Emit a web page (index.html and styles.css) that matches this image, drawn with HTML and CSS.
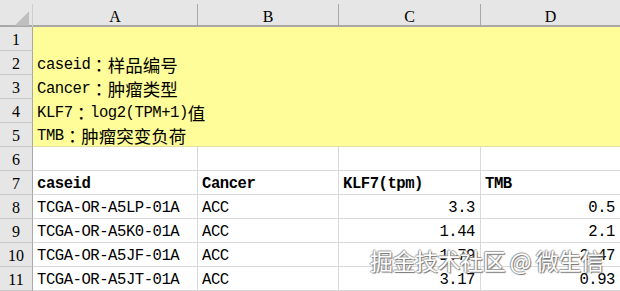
FILE: index.html
```html
<!DOCTYPE html>
<html lang="zh">
<head>
<meta charset="utf-8">
<title>Sheet</title>
<link rel="stylesheet" href="styles.css">
</head>
<body>
<div class="sheet">
  <div class="row colhead">
    <div class="corner"><svg width="33" height="23" viewBox="0 0 33 23"><polygon points="15,22 30,22 30,7" fill="#BFBFBF"/></svg></div>
    <div class="ch">A</div>
    <div class="ch">B</div>
    <div class="ch">C</div>
    <div class="ch">D</div>
  </div>
  <div class="row note"><div class="rn">1</div><div class="span"></div></div>
  <div class="row note"><div class="rn">2</div><div class="span">caseid<span class="pc">：</span><span class="cj">样品编号</span></div></div>
  <div class="row note"><div class="rn">3</div><div class="span">Cancer<span class="pc">：</span><span class="cj">肿瘤类型</span></div></div>
  <div class="row note"><div class="rn">4</div><div class="span">KLF7<span class="pc">：</span>log2(TPM+1)<span class="cj">值</span></div></div>
  <div class="row note last"><div class="rn">5</div><div class="span">TMB<span class="pc">：</span><span class="cj">肿瘤突变负荷</span></div></div>
  <div class="row"><div class="rn">6</div><div class="c"></div><div class="c"></div><div class="c"></div><div class="c"></div></div>
  <div class="row bold"><div class="rn">7</div><div class="c">caseid</div><div class="c">Cancer</div><div class="c">KLF7(tpm)</div><div class="c">TMB</div></div>
  <div class="row"><div class="rn">8</div><div class="c">TCGA-OR-A5LP-01A</div><div class="c">ACC</div><div class="c num">3.3</div><div class="c num">0.5</div></div>
  <div class="row"><div class="rn">9</div><div class="c">TCGA-OR-A5K0-01A</div><div class="c">ACC</div><div class="c num">1.44</div><div class="c num">2.1</div></div>
  <div class="row"><div class="rn">10</div><div class="c">TCGA-OR-A5JF-01A</div><div class="c">ACC</div><div class="c num">1.79</div><div class="c num">2.47</div></div>
  <div class="row"><div class="rn">11</div><div class="c">TCGA-OR-A5JT-01A</div><div class="c">ACC</div><div class="c num">3.17</div><div class="c num">0.93</div></div>
</div>
<div class="watermark">掘金技术社区 @ 微生信</div>
</body>
</html>
```
FILE: styles.css
```css
html, body {
  margin: 0;
  padding: 0;
  overflow: hidden;
  background: #ffffff;
}
body {
  width: 620px;
  height: 291px;
  position: relative;
  font-family: "Liberation Mono", "Noto Sans CJK SC", monospace;
  font-size: 15.6px;
  letter-spacing: -0.47px;
  color: #000;
}
.sheet {
  display: flex;
  flex-direction: column;
  width: 621px;
}
.row {
  display: grid;
  grid-template-columns: 33px 165px 141px 142px 140px;
  height: 24px;
}
.colhead {
  height: 27px;
  background: #E6E6E6;
  border-bottom: 2px solid #A8A8A8;
  box-sizing: border-box;
  padding-top: 4px;
}
.corner {
  border-right: 1px solid #CFCFCF;
  display: flex;
}
.ch {
  border-right: 1px solid #A8A8A8;
  font-family: "Liberation Serif", serif;
  font-size: 16px;
  letter-spacing: 0;
  display: flex;
  align-items: flex-end;
  justify-content: center;
  line-height: 18px;
  padding-bottom: 1px;
}
.rn {
  background: #E6E6E6;
  border-right: 1px solid #A8A8A8;
  border-bottom: 1px solid #C8C8C8;
  font-family: "Liberation Serif", serif;
  font-size: 16px;
  letter-spacing: 0;
  display: flex;
  align-items: flex-end;
  justify-content: center;
  line-height: 18px;
  padding-bottom: 1px;
}
.c, .span {
  border-right: 1px solid #D9D9D9;
  border-bottom: 1px solid #D9D9D9;
  display: flex;
  align-items: flex-end;
  padding: 0 5px 2px 4px;
  line-height: 16px;
  white-space: nowrap;
  overflow: visible;
}
.note .span {
  grid-column: 2 / -1;
  background: #FFFD99;
  border-right: none;
  border-bottom: none;
}
.note.last .span {
  border-bottom: 1px solid #E2E0A0;
}
.cj {
  font-family: "Noto Sans CJK SC", sans-serif;
  font-size: 17.5px;
  letter-spacing: 0;
  line-height: 16px;
}
.pc {
  font-family: "Noto Sans CJK TC", sans-serif;
  font-size: 17.5px;
  letter-spacing: 0;
  line-height: 16px;
}
.bold .c {
  font-weight: bold;
}
.num {
  justify-content: flex-end;
}
.watermark {
  position: absolute;
  left: 370px;
  top: 249px;
  font-family: "Noto Sans CJK SC", sans-serif;
  font-size: 23px;
  line-height: 1;
  color: #ffffff;
  white-space: nowrap;
  text-shadow: 1px 1px 1px #6f6f6f, -1px 0 1px #9a9a9a, 0 -1px 1px #9a9a9a;
}
```
